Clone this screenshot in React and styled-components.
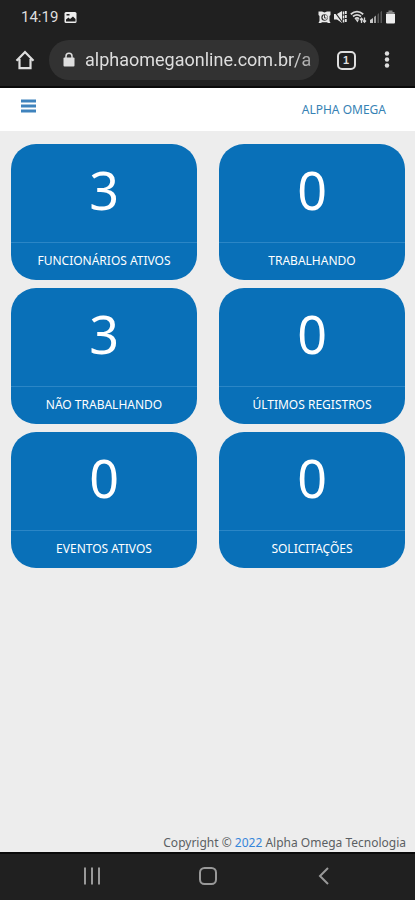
import React from 'react';
import styled, { createGlobalStyle } from 'styled-components';

const GlobalStyle = createGlobalStyle`
  *, *::before, *::after {
    box-sizing: border-box;
  }

  body {
    margin: 0;
    background: #ededed;
    font-family: 'Noto Sans', sans-serif;
  }
`;

const Screen = styled.div`
  display: flex;
  flex-direction: column;
  min-height: 100vh;
`;

const BrowserChrome = styled.header`
  background: #202020;
  border-bottom: 2px solid #0a0a0a;
  color: #dedede;
  font-family: Roboto, sans-serif;
`;

const StatusBar = styled.div`
  display: flex;
  align-items: center;
  justify-content: space-between;
  height: 34px;
  padding: 0 20px 0 21px;
`;

const StatusGroup = styled.div`
  display: flex;
  align-items: center;
  gap: ${(props) => props.gap};
`;

const Clock = styled.time`
  font-size: 15px;
  line-height: 20px;
`;

const Toolbar = styled.div`
  display: flex;
  align-items: center;
  height: 52px;
  padding: 0 15px 0 12px;
`;

const IconButton = styled.button`
  display: flex;
  align-items: center;
  justify-content: center;
  width: ${(props) => props.width || '26px'};
  height: 40px;
  padding: 0;
  border: none;
  background: none;
  color: inherit;
`;

const AddressBar = styled.label`
  display: flex;
  flex: 1;
  align-items: center;
  gap: 10px;
  min-width: 0;
  height: 40px;
  margin: 0 14px 0 11px;
  padding: 0 6px 0 14px;
  border-radius: 20px;
  background: #323232;
`;

const AddressInput = styled.input`
  flex: 1;
  min-width: 0;
  padding: 0;
  border: none;
  outline: none;
  background: none;
  color: #dedede;
  font-family: inherit;
  font-size: 18px;
  line-height: 24px;
  mask-image: linear-gradient(to right, #000 90%, rgba(0, 0, 0, 0.6));
`;

const TabButton = styled(IconButton)`
  margin-right: 15px;
`;

const TabCount = styled.span`
  display: flex;
  align-items: center;
  justify-content: center;
  width: 19px;
  height: 19px;
  border: 2px solid #dedede;
  border-radius: 5px;
  font-size: 11px;
  font-weight: 700;
  line-height: 12px;
`;

const PageHeader = styled.nav`
  display: flex;
  align-items: center;
  justify-content: space-between;
  height: 43px;
  padding: 0 29px 0 15px;
  background: #fff;
`;

const MenuButton = styled(IconButton)`
  height: 36px;
  margin-bottom: 7px;
  color: #3f83bd;
`;

const Brand = styled.a`
  color: #3682b4;
  font-size: 12px;
  line-height: 18px;
  text-decoration: none;
`;

const Cards = styled.main`
  display: grid;
  flex: 1;
  grid-template-columns: 1fr 1fr;
  align-content: start;
  gap: 8px 22px;
  padding: 13px 10px 13px 11px;
`;

const Card = styled.section`
  display: flex;
  flex-direction: column;
  border-radius: 25px;
  background: #0970b8;
  color: #fff;
  text-align: center;
`;

const CardValue = styled.div`
  height: 98px;
  padding-top: 11px;
  font-size: 52px;
  line-height: 70px;
`;

const CardLabel = styled.h2`
  margin: 0;
  padding: 8px 0 10px;
  border-top: 1px solid #2b86c6;
  font-size: 12px;
  font-weight: 400;
  line-height: 19px;
`;

const Footer = styled.footer`
  padding: 0 9px;
  color: #5b5f63;
  font-size: 12px;
  line-height: 19px;
  text-align: right;
`;

const Year = styled.span`
  color: #3585da;
`;

const NavigationBar = styled.nav`
  display: flex;
  align-items: center;
  justify-content: center;
  gap: 76px;
  height: 48px;
  padding-bottom: 2px;
  border-top: 2px solid #0a0a0a;
  background: #202020;
  color: #999;
`;

const ImageIcon = () => (
  <svg width="13" height="13" viewBox="0 0 13 13">
    <rect x="0.5" y="1" width="12" height="11" rx="1.5" fill="#eee" />
    <path d="M2 10.5V8.5L4.5 6.5 6 8l3-2.5 2.5 2.5v2.5z" fill="#202020" />
    <rect x="2.5" y="3" width="3" height="1.5" fill="#202020" />
  </svg>
);

const AlarmIcon = () => (
  <svg width="13" height="14" viewBox="0 0 13 14">
    <path
      d="M.5 1.500H4l2.500 1 2.500-1h3.500V5l-1 1v5l1 2H10l-1-.8H4l-1 .8H.5l1-2V6l-1-1z"
      fill="#e8e8e8"
    />
    <circle cx="6.500" cy="7.500" r="3.200" fill="#303030" />
    <circle cx="7" cy="7.500" r="2.400" fill="#e8e8e8" />
    <path
      d="M6.500 5v3h2"
      fill="none"
      stroke="#404040"
      strokeWidth="1"
    />
  </svg>
);

const MuteIcon = () => (
  <svg width="13" height="14" viewBox="0 0 13 14">
    <path d="M0 4h3L8 1v12L3 9.500H0z" fill="#e8e8e8" />
    <path d="M.5 1.500 8.500 12.500" stroke="#202020" strokeWidth="1.200" />
    <path
      d="M9.500 1.500v11"
      stroke="#e8e8e8"
      strokeWidth="1.500"
      strokeDasharray="3 1"
    />
    <path
      d="M11.800 1v12"
      stroke="#e8e8e8"
      strokeWidth="1.800"
      strokeDasharray="3 1"
    />
  </svg>
);

const WifiIcon = () => (
  <svg width="17" height="14" viewBox="0 0 17 14" fill="none">
    <path
      d="M.8 4.200Q7 -1 13.200 4.200M3 6.500q4-3.300 8 0M5 8.800q2-1.800 4 0"
      stroke="#d8d8d8"
      strokeWidth="1.800"
    />
    <path d="M5.200 9 7.500 12.500 9 9.500z" fill="#d8d8d8" />
    <path
      d="M11.500 13V8.500M10 10l1.500-1.800L13 10M14.500 7.500V12M13 10.500l1.500 1.700 1.500-1.700"
      stroke="#d8d8d8"
      strokeWidth="1.300"
    />
  </svg>
);

const SignalIcon = () => (
  <svg width="13" height="14" viewBox="0 0 13 14" fill="#585858">
    <path d="M0 13v-3l3-2v5z" fill="#c8c8c8" />
    <path d="M4 13V7l2-1.500V13z" fill="#a0a0a0" />
    <path d="M7.500 13V4.500L9 3v10zM10.500 13V2L12 .8V13z" />
  </svg>
);

const BatteryIcon = () => (
  <svg width="9" height="14" viewBox="0 0 9 14">
    <path d="M2.500 .5h4V2H8.500v2H.5V2h2z" fill="#888" />
    <path d="M0 4h9v8.500q0 1-1 1H1q-1 0-1-1z" fill="#eee" />
  </svg>
);

const HomeIcon = () => (
  <svg
    width="20"
    height="20"
    viewBox="0 0 20 20"
    fill="none"
    stroke="currentColor"
    strokeWidth="2.200"
  >
    <path d="M1.500 10.800 10 2l8.500 8.800M4.500 9v9.200h11V9" />
  </svg>
);

const LockIcon = () => (
  <svg width="12" height="16" viewBox="0 0 12 16">
    <path
      d="M3 6.500V4.200a3 3 0 0 1 6 0v2.300"
      fill="none"
      stroke="#dedede"
      strokeWidth="1.500"
    />
    <rect x="0.5" y="5.500" width="11" height="9" rx="1" fill="#dedede" />
  </svg>
);

const DotsIcon = () => (
  <svg width="6" height="20" viewBox="0 0 6 20" fill="currentColor">
    <circle cx="3" cy="3.500" r="2.200" />
    <circle cx="3" cy="9.500" r="2.200" />
    <circle cx="3" cy="15.500" r="2.200" />
  </svg>
);

const BarsIcon = () => (
  <svg width="15" height="14" viewBox="0 0 15 14" fill="currentColor">
    <path d="M0 .5h15v3H0zM0 5.500h15v3H0zM0 10.500h15v3H0z" />
  </svg>
);

const RecentsIcon = () => (
  <svg
    width="18"
    height="18"
    viewBox="0 0 18 18"
    stroke="currentColor"
    strokeWidth="2"
  >
    <path d="M2 .5v17M9 .5v17M16 .5v17" />
  </svg>
);

const SquareIcon = () => (
  <svg
    width="18"
    height="18"
    viewBox="0 0 18 18"
    fill="none"
    stroke="currentColor"
    strokeWidth="2"
  >
    <rect x="1" y="1" width="16" height="16" rx="4.500" />
  </svg>
);

const BackIcon = () => (
  <svg
    width="11"
    height="18"
    viewBox="0 0 11 18"
    fill="none"
    stroke="currentColor"
    strokeWidth="2"
  >
    <path d="M10 1 2 9l8 8" />
  </svg>
);

const indicators = [
  { label: 'FUNCIONÁRIOS ATIVOS', value: 3 },
  { label: 'TRABALHANDO', value: 0 },
  { label: 'NÃO TRABALHANDO', value: 3 },
  { label: 'ÚLTIMOS REGISTROS', value: 0 },
  { label: 'EVENTOS ATIVOS', value: 0 },
  { label: 'SOLICITAÇÕES', value: 0 },
];

const App = () => (
  <Screen>
    <GlobalStyle />
    <BrowserChrome>
      <StatusBar>
        <StatusGroup gap="6px">
          <Clock>14:19</Clock>
          <ImageIcon />
        </StatusGroup>
        <StatusGroup gap="3px">
          <AlarmIcon />
          <MuteIcon />
          <WifiIcon />
          <SignalIcon />
          <BatteryIcon />
        </StatusGroup>
      </StatusBar>
      <Toolbar>
        <IconButton aria-label="Página inicial">
          <HomeIcon />
        </IconButton>
        <AddressBar htmlFor="address">
          <LockIcon />
          <AddressInput
            id="address"
            type="text"
            aria-label="Endereço"
            defaultValue="alphaomegaonline.com.br/a"
          />
        </AddressBar>
        <TabButton aria-label="Abas">
          <TabCount>1</TabCount>
        </TabButton>
        <IconButton aria-label="Mais opções">
          <DotsIcon />
        </IconButton>
      </Toolbar>
    </BrowserChrome>
    <PageHeader>
      <MenuButton aria-label="Menu">
        <BarsIcon />
      </MenuButton>
      <Brand href="#">ALPHA OMEGA</Brand>
    </PageHeader>
    <Cards>
      {indicators.map(({ label, value }) => (
        <Card key={label}>
          <CardValue>{value}</CardValue>
          <CardLabel>{label}</CardLabel>
        </Card>
      ))}
    </Cards>
    <Footer>
      Copyright © <Year>2022</Year> Alpha Omega Tecnologia
    </Footer>
    <NavigationBar>
      <IconButton width="40px" aria-label="Recentes">
        <RecentsIcon />
      </IconButton>
      <IconButton width="40px" aria-label="Início">
        <SquareIcon />
      </IconButton>
      <IconButton width="40px" aria-label="Voltar">
        <BackIcon />
      </IconButton>
    </NavigationBar>
  </Screen>
);

export default App;
